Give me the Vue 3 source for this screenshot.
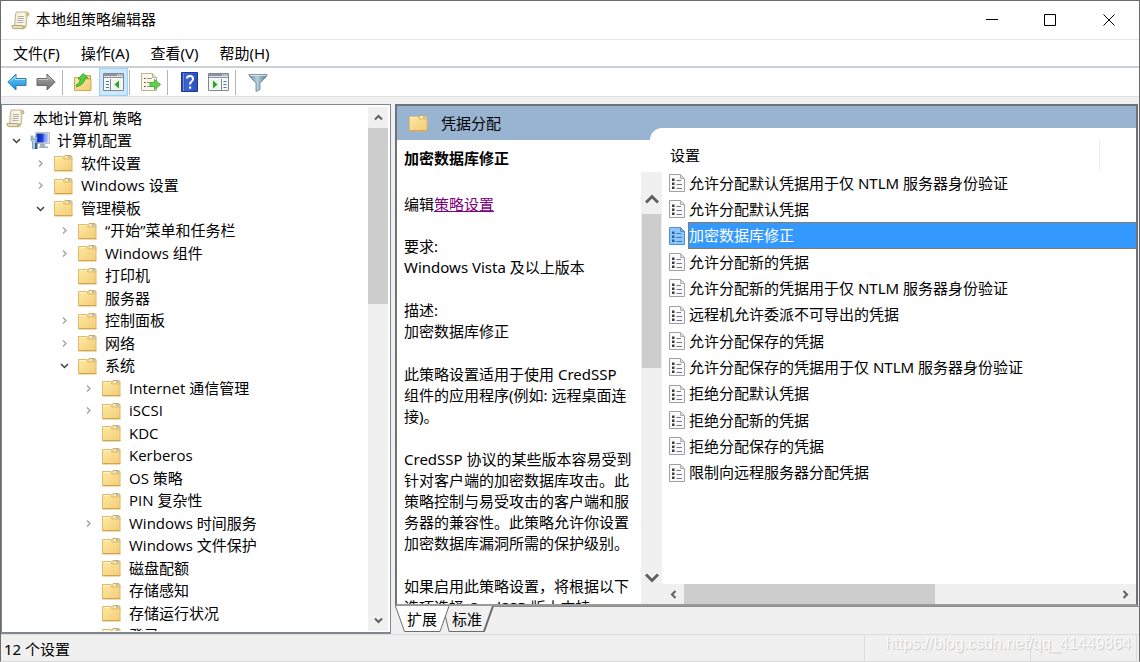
<script setup>
const menus = ['文件(F)', '操作(A)', '查看(V)', '帮助(H)']

const tree = [
  { level: 0, text: '本地计算机 策略', icon: 'scroll' },
  { level: 1, text: '计算机配置', icon: 'computer', state: 'open' },
  { level: 2, text: '软件设置', state: 'closed' },
  { level: 2, text: 'Windows 设置', state: 'closed' },
  { level: 2, text: '管理模板', state: 'open' },
  { level: 3, text: '“开始”菜单和任务栏', state: 'closed' },
  { level: 3, text: 'Windows 组件', state: 'closed' },
  { level: 3, text: '打印机' },
  { level: 3, text: '服务器' },
  { level: 3, text: '控制面板', state: 'closed' },
  { level: 3, text: '网络', state: 'closed' },
  { level: 3, text: '系统', state: 'open' },
  { level: 4, text: 'Internet 通信管理', state: 'closed' },
  { level: 4, text: 'iSCSI', state: 'closed' },
  { level: 4, text: 'KDC' },
  { level: 4, text: 'Kerberos' },
  { level: 4, text: 'OS 策略' },
  { level: 4, text: 'PIN 复杂性' },
  { level: 4, text: 'Windows 时间服务', state: 'closed' },
  { level: 4, text: 'Windows 文件保护' },
  { level: 4, text: '磁盘配额' },
  { level: 4, text: '存储感知' },
  { level: 4, text: '存储运行状况' },
  { level: 4, text: '登录' },
]

const paragraphs = [
  ['要求:', 'Windows Vista 及以上版本'],
  ['描述:', '加密数据库修正'],
  ['此策略设置适用于使用 CredSSP', '组件的应用程序(例如: 远程桌面连', '接)。'],
  [
    'CredSSP 协议的某些版本容易受到',
    '针对客户端的加密数据库攻击。此',
    '策略控制与易受攻击的客户端和服',
    '务器的兼容性。此策略允许你设置',
    '加密数据库漏洞所需的保护级别。',
  ],
  ['如果启用此策略设置，将根据以下', '选项选择 CredSSP 版本支持:'],
]

const settings = [
  '允许分配默认凭据用于仅 NTLM 服务器身份验证',
  '允许分配默认凭据',
  '加密数据库修正',
  '允许分配新的凭据',
  '允许分配新的凭据用于仅 NTLM 服务器身份验证',
  '远程机允许委派不可导出的凭据',
  '允许分配保存的凭据',
  '允许分配保存的凭据用于仅 NTLM 服务器身份验证',
  '拒绝分配默认凭据',
  '拒绝分配新的凭据',
  '拒绝分配保存的凭据',
  '限制向远程服务器分配凭据',
]
const selected = 2
</script>

<template>
  <div class="window">
    <svg class="defs" width="0" height="0" aria-hidden="true">
      <defs>
        <linearGradient id="gFolder" x1="0" y1="0" x2="1" y2="1">
          <stop offset="0" stop-color="#ffe9a3" />
          <stop offset="1" stop-color="#f2cc76" />
        </linearGradient>
        <linearGradient id="gPaper" x1="0" y1="0" x2="1" y2="0">
          <stop offset="0" stop-color="#f1e8cb" />
          <stop offset="0.6" stop-color="#fdf9ec" />
          <stop offset="1" stop-color="#e6d9b0" />
        </linearGradient>
        <linearGradient id="gBlue" x1="0" y1="0" x2="0" y2="1">
          <stop offset="0" stop-color="#6fc8f5" />
          <stop offset="1" stop-color="#1b8fdc" />
        </linearGradient>
        <linearGradient id="gGrey" x1="0" y1="0" x2="0" y2="1">
          <stop offset="0" stop-color="#a8a8a8" />
          <stop offset="1" stop-color="#6e6e6e" />
        </linearGradient>
        <linearGradient id="gHelp" x1="0" y1="0" x2="1" y2="0">
          <stop offset="0" stop-color="#2444a8" />
          <stop offset="0.3" stop-color="#3f66d0" />
          <stop offset="1" stop-color="#2b50bd" />
        </linearGradient>
        <linearGradient id="gFunnel" x1="0" y1="0" x2="1" y2="0">
          <stop offset="0" stop-color="#5f8095" />
          <stop offset="0.45" stop-color="#b9d0dc" />
          <stop offset="1" stop-color="#56778c" />
        </linearGradient>
        <linearGradient id="gScreen" x1="0" y1="0" x2="1" y2="0">
          <stop offset="0" stop-color="#0a1fb4" />
          <stop offset="0.55" stop-color="#1f45d8" />
          <stop offset="0.65" stop-color="#6d8cf0" />
          <stop offset="1" stop-color="#b3c8f8" />
        </linearGradient>
      </defs>
      <symbol id="folder" viewBox="0 0 19 18">
        <path d="M9.500 3.500L11 1.500h5.500l1.500 1v3h-8.500z" fill="#f6dc94" stroke="#d2ab58" />
        <path d="M12 2.500h4.500v1H12z" fill="#fff" />
        <path d="M14 2.500h2.500v1H14z" fill="#3f95dc" />
        <path d="M.5 2.500h8.500l1 2.500h8v12H.5z" fill="url(#gFolder)" stroke="#dfba68" />
        <path d="M1 16.500h17.500" stroke="#cfa654" />
        <path d="M1.500 3.500h7" stroke="#fff3c8" />
      </symbol>
      <symbol id="scroll" viewBox="0 0 19 19">
        <path d="M5.500 1h10.500q2 .3 2 2.500 0 1.700-2 1.700L15 15.500H3.500L4.500 3z" fill="url(#gPaper)" stroke="#b5aa8c" stroke-width=".9" />
        <path d="M15 1.500q-1.200 1.700.5 3.500 2.300.2 2.300-1.800T16 1.300z" fill="#cdbb83" />
        <path d="M1 14.500h10.500q0 2.500 1.500 3.200H3Q.6 17.500 1 14.500z" fill="#eadfb9" stroke="#a89c78" stroke-width=".9" />
        <path d="M11.500 14.500h3.800q0 3-2.300 3.200-1.700-.6-1.500-3.200z" fill="#c9b67e" />
        <path d="M7 5.500h6M7 7.500h6M6.500 9.500h6M6.500 11.500h6" stroke="#aeb0b0" />
      </symbol>
      <symbol id="computer" viewBox="0 0 21 19">
        <path d="M5.500 1.500h14v11h-14z" fill="#dfe1e3" stroke="#bfc3c8" />
        <path d="M6.500 2.500h11.500v9H6.500z" fill="url(#gScreen)" />
        <path d="M10 13h5v2.500h3V17H9v-1.500h1z" fill="#a9aeb4" />
        <path d="M1 6l1-1.500L3 6v2.500h2V6l1-1.500L7 6v3L5.500 11v6.500H2.500V11L1 9z" fill="#a9cbe4" stroke="#6e94b2" stroke-width=".8" />
        <path d="M5 12h2.500v6H5z" fill="#2e628e" />
      </symbol>
      <symbol id="policy" viewBox="0 0 16 18">
        <path d="M.5.500h11l4 4v13H.5z" fill="#fafafa" stroke="#a0a0a0" />
        <path d="M11.500.500v4h4z" fill="#dedede" stroke="#b0b0b0" />
        <path d="M3 4.500h2.500V7H3zM3 8.500h2.500V11H3zM3 12.500h2.500V15H3z" fill="#3c3c3c" />
        <path d="M7.500 6.500H12M7.500 10.500H13M7.500 14.500H13" stroke="#747096" />
      </symbol>
      <symbol id="policy-selected" viewBox="0 0 16 18">
        <path d="M.5.500h11l4 4v13H.5z" fill="#8fc5fb" stroke="#4a90d5" />
        <path d="M11.500.500v4h4z" fill="#6eb0f2" stroke="#4a90d5" />
        <path d="M3 4.500h2.500V7H3zM3 8.500h2.500V11H3zM3 12.500h2.500V15H3z" fill="#235f9f" />
        <path d="M7.500 6.500H12M7.500 10.500H13M7.500 14.500H13" stroke="#3679c8" />
      </symbol>
    </svg>

    <header class="titlebar">
      <svg class="app-icon" width="19" height="19"><use href="#scroll" /></svg>
      <h1>本地组策略编辑器</h1>
      <button class="caption" aria-label="最小化"><svg width="12" height="12"><path d="M0 5.500h12" /></svg></button>
      <button class="caption" aria-label="最大化"><svg width="12" height="12"><path d="M.5.500h11v11H.5z" /></svg></button>
      <button class="caption" aria-label="关闭"><svg width="12" height="12"><path d="M.5.500l11 11M11.500.500l-11 11" /></svg></button>
    </header>

    <nav class="menubar">
      <button v-for="m in menus" :key="m">{{ m }}</button>
    </nav>

    <div class="toolbar" role="toolbar">
      <button aria-label="后退">
        <svg width="20" height="18"><path d="M.8 9L9 1v4.500h10v7H9V17z" fill="url(#gBlue)" stroke="#2f7fb4" /><path d="M3 8.500l5-5v3h10" fill="none" stroke="#a8e0fb" /></svg>
      </button>
      <button aria-label="前进">
        <svg width="20" height="18"><path d="M19.200 9L11 1v4.500H1v7h10V17z" fill="url(#gGrey)" stroke="#6b6b6b" /><path d="M2 6.500h10v-3l4 4" fill="none" stroke="#c4c4c4" /></svg>
      </button>
      <span class="sep"></span>
      <button class="up" aria-label="向上一级">
        <svg width="20" height="20">
          <path d="M11 3.500h6.500V7H11z" fill="#f3d88c" stroke="#caa351" />
          <path d="M1.500 5.500h9L12 7h6v11.500H1.500z" fill="url(#gFolder)" stroke="#cda754" />
          <path d="M3 13q4-1 4.500-6H5l5-5.500L15 6h-3q0 6-8.500 9z" fill="#4fd03c" stroke="#2e9c25" stroke-width=".8" />
        </svg>
      </button>
      <button class="active" aria-label="显示/隐藏控制台树">
        <svg width="21" height="18">
          <path d="M.5.500h20v17H.5z" fill="#f7f8f9" stroke="#81878d" />
          <path d="M1 1h19v4H1z" fill="#8a949e" /><path d="M1 3.500h19" stroke="#dfe4e8" />
          <path d="M14 2h1.500M16 2h1.500M18 2h1.500" stroke="#fff" />
          <path d="M7.500 6v11" stroke="#81878d" /><path d="M3 8.500h3M3 11.500h3M3 14.500h3" stroke="#3679bd" />
          <path d="M10 7h8v9h-8z" fill="#e9f5e5" /><path d="M16 7.500v8L11.500 11.500z" fill="#2fa12e" />
        </svg>
      </button>
      <span class="sep after-active"></span>
      <button class="export" aria-label="导出列表">
        <svg width="21" height="20">
          <path d="M1.500 1.500h11l4 4v13h-15z" fill="#fdf8e6" stroke="#b9b39c" />
          <path d="M12.500 1.500v4h4" fill="#e8e0c4" stroke="#b9b39c" />
          <path d="M4 6.500h1.500M4 10.500h1.500M4 14.500h1.500" stroke="#444" />
          <path d="M7 6.500h5M7 10.500h4M7 14.500h4" stroke="#8f93ae" />
          <path d="M10 10.500h4.500v-3l6 5-6 5v-3H10z" fill="#5fd34a" stroke="#36a52c" stroke-width=".8" />
        </svg>
      </button>
      <span class="sep"></span>
      <button class="help" aria-label="帮助">
        <svg width="17" height="20">
          <path d="M.5.500h16v19H.5z" fill="url(#gHelp)" stroke="#1d3794" />
          <path d="M2.500 1v18" stroke="#7390df" />
          <path d="M6 6.500Q6 4 9 4t3 3q0 1.500-1.500 2.500T9 12.500" fill="none" stroke="#fff" stroke-width="2" />
          <path d="M8 14.500h2.200v2.200H8z" fill="#fff" />
        </svg>
      </button>
      <button aria-label="显示/隐藏操作窗格">
        <svg width="21" height="18">
          <path d="M.5.500h20v17H.5z" fill="#f7f8f9" stroke="#81878d" />
          <path d="M1 1h19v4H1z" fill="#8a949e" /><path d="M1 3.500h19" stroke="#dfe4e8" />
          <path d="M14 2h1.500M16 2h1.500M18 2h1.500" stroke="#fff" />
          <path d="M13.500 6v11" stroke="#81878d" /><path d="M15.500 8.500h3M15.500 11.500h3M15.500 14.500h3" stroke="#3679bd" />
          <path d="M3 7h8v9H3z" fill="#e9f5e5" /><path d="M5 7.500v8L9.500 11.500z" fill="#2fa12e" />
        </svg>
      </button>
      <span class="sep"></span>
      <button aria-label="筛选">
        <svg width="20" height="19">
          <path d="M.8 1.500h18.400L18 4l-6 6v6.500L8 18.500V10L2 4z" fill="url(#gFunnel)" stroke="#6a8798" stroke-width=".8" />
          <path d="M2 2.500h16" stroke="#d7e4ec" />
        </svg>
      </button>
    </div>

    <main class="workspace">
      <section class="tree-pane">
        <ul class="tree">
          <li v-for="n in tree" :key="n.text" :class="'level-' + n.level">
            <button v-if="n.state" class="toggle" :class="n.state" :aria-label="n.state === 'open' ? '折叠' : '展开'">
              <svg v-if="n.state === 'open'" width="9" height="9"><path d="M1 3l3.500 3.500L8 3" /></svg>
              <svg v-else width="9" height="9"><path d="M3 1.500l3 3-3 3" /></svg>
            </button>
            <span v-else-if="n.level" class="toggle"></span>
            <svg v-if="n.icon === 'computer'" class="node-icon" width="21" height="19"><use href="#computer" /></svg>
            <svg v-else-if="n.icon === 'scroll'" class="node-icon" width="19" height="19"><use href="#scroll" /></svg>
            <svg v-else class="node-icon" width="19" height="18"><use href="#folder" /></svg>
            <span class="label">{{ n.text }}</span>
          </li>
        </ul>
        <div class="scroll tree-scroll">
          <button aria-label="向上滚动"><svg width="9" height="7"><path d="M1 5.500L4.500 2 8 5.500" /></svg></button>
          <div class="thumb"></div>
          <div class="track"></div>
          <button aria-label="向下滚动"><svg width="9" height="7"><path d="M1 1.500L4.500 5 8 1.500" /></svg></button>
        </div>
      </section>

      <section class="right">
        <div class="result-pane">
          <div class="result-head">
            <svg width="19" height="18"><use href="#folder" /></svg>
            <span>凭据分配</span>
          </div>
          <div class="result-body">
            <article class="detail">
              <h2>加密数据库修正</h2>
              <p class="edit">编辑<a href="#">策略设置</a></p>
              <p v-for="(p, i) in paragraphs" :key="i">
                <span v-for="line in p" :key="line">{{ line }}</span>
              </p>
            </article>
            <div class="scroll detail-scroll">
              <button aria-label="向上滚动"><svg width="14" height="12"><path d="M1 9.500L7 3.500 13 9.500" /></svg></button>
              <div class="thumb"></div>
              <div class="track"></div>
              <button aria-label="向下滚动"><svg width="14" height="12"><path d="M1 2.500L7 8.500 13 2.500" /></svg></button>
            </div>
            <div class="list">
              <div class="column-head"><span>设置</span></div>
              <ul>
                <li v-for="(s, i) in settings" :key="s" :class="{ selected: i === selected }">
                  <svg width="16" height="18"><use :href="i === selected ? '#policy-selected' : '#policy'" /></svg>
                  <span>{{ s }}</span>
                </li>
              </ul>
              <div class="hscroll">
                <button aria-label="向左滚动"><svg width="7" height="9"><path d="M5.500 1L2 4.500 5.500 8" /></svg></button>
                <div class="thumb"></div>
                <div class="track"></div>
                <button aria-label="向右滚动"><svg width="7" height="9"><path d="M1.500 1L5 4.500 1.500 8" /></svg></button>
              </div>
            </div>
          </div>
        </div>
        <div class="tabs" role="tablist">
          <svg class="tab-shape" width="100" height="27" aria-hidden="true">
            <path d="M48 0L54 25.500H89L98 0" fill="#f0f0f0" stroke="#6d6d6d" />
            <path d="M98 0L89 25.500" stroke="#6d6d6d" stroke-width="2" />
            <path d="M.5 0L9.500 25.500H45L54 0" fill="#fff" stroke="#6d6d6d" />
          </svg>
          <button role="tab" aria-selected="true">扩展</button>
          <button role="tab" aria-selected="false">标准</button>
        </div>
      </section>
    </main>

    <footer class="statusbar">
      <span class="status-text">12 个设置</span>
      <span class="cell wide"></span>
      <span class="cell"></span>
      <span class="watermark">https://blog.csdn.net/qq_41449864</span>
    </footer>
  </div>
</template>

<style>
body {
  margin: 0;
}
</style>

<style scoped>
.window {
  display: flex;
  flex-direction: column;
  height: 100vh;
  box-sizing: border-box;
  border: 1px solid #6b6b6b;
  border-bottom-color: #d9d9d9;
  background: #f0f0f0;
  color: #000;
  font-family: "Noto Sans", "Noto Sans CJK SC", sans-serif;
  font-size: 15px;
  line-height: 21px;
  overflow: hidden;
}
.defs {
  position: absolute;
}
button {
  display: flex;
  align-items: center;
  justify-content: center;
  padding: 0;
  border: 0;
  background: none;
  color: inherit;
  font: inherit;
}
svg {
  display: block;
  flex: none;
}
ul,
h1,
h2,
p {
  margin: 0;
  padding: 0;
  list-style: none;
}
.titlebar {
  display: flex;
  align-items: center;
  flex: none;
  height: 38px;
  background: #fff;
  border-bottom: 1px solid #e5e5e5;
}
.app-icon {
  margin: 0 6px 0 10px;
}
h1 {
  flex: 1;
  padding-bottom: 2px;
  font-size: 15px;
  font-weight: 400;
}
.caption {
  width: 58px;
  height: 38px;
}
.caption:last-child {
  width: 60px;
}
.caption path {
  fill: none;
  stroke: #000;
}
.menubar {
  display: flex;
  gap: 21px;
  flex: none;
  height: 26px;
  padding-left: 12px;
  background: #fff;
  border-bottom: 2px solid #ccd1d6;
}
.toolbar {
  display: flex;
  align-items: center;
  flex: none;
  height: 28px;
  padding-left: 1px;
  background: #fff;
  border-bottom: 1px solid #e0e0e0;
}
.toolbar button {
  width: 29px;
  height: 28px;
}
.toolbar .up {
  padding-right: 3px;
}
.toolbar .active {
  box-sizing: border-box;
  border: 1px solid #99d1ff;
  background: #cce8ff;
}
.sep {
  width: 1px;
  height: 25px;
  margin: 0 7px 0 2px;
  background: #b5b5b5;
}
.after-active {
  margin: 0 6px 0 1px;
}
.tree-pane {
  display: flex;
  box-sizing: border-box;
  width: 390px;
  flex: none;
  padding: 2px 2px 1px 1px;
  background: #fff;
  border: 1px solid #828790;
  border-bottom-width: 2px;
  overflow: hidden;
}
.workspace {
  display: flex;
  flex: 1;
  min-height: 0;
  gap: 4px;
  padding-top: 7px;
}
.tree {
  flex: 1;
  overflow: hidden;
  font-family: "Open Sans", "Noto Sans CJK SC", sans-serif;
}
.tree li {
  display: flex;
  align-items: center;
  height: 22px;
  white-space: nowrap;
}
.tree li:nth-child(even) {
  height: 23px;
}
.tree .level-0,
.tree .level-1 {
  padding-left: 3px;
}
.tree .level-2 {
  padding-left: 27px;
}
.tree .level-3 {
  padding-left: 51px;
}
.tree .level-4 {
  padding-left: 75px;
}
.toggle {
  width: 20px;
  height: 20px;
  margin-right: 4px;
  flex: none;
}
.toggle path {
  fill: none;
  stroke: #a6a6a6;
  stroke-width: 1.5;
}
.toggle.open path {
  stroke: #404040;
}
.node-icon {
  margin-right: 8px;
}
.level-1 .node-icon {
  margin-right: 6px;
}
.scroll {
  display: flex;
  flex-direction: column;
  flex: none;
  background: #f0f0f0;
}
.track {
  flex: 1;
}
.thumb {
  flex: none;
  background: #cdcdcd;
}
.scroll path,
.hscroll path {
  fill: none;
  stroke: #606060;
  stroke-width: 2;
}
.tree-scroll {
  width: 20px;
}
.tree-scroll button {
  height: 21px;
}
.tree-scroll .thumb {
  height: 176px;
}
.right {
  display: flex;
  flex-direction: column;
  flex: 1;
  min-width: 0;
}
.result-pane {
  display: flex;
  flex-direction: column;
  flex: 1;
  min-height: 0;
  margin-right: 1px;
  border: 2px solid #6f7276;
  border-bottom-color: #9a9a9a;
  background: #fff;
}
.result-head {
  display: flex;
  align-items: center;
  position: relative;
  flex: none;
  height: 34px;
  gap: 13px;
  padding-left: 12px;
  background: #99b4d1;
}
.result-head::after {
  content: "";
  position: absolute;
  left: 253px;
  right: 0;
  bottom: 0;
  height: 12px;
  border-top-left-radius: 12px;
  background: #fff;
}
.result-body {
  display: flex;
  flex: 1;
  min-height: 0;
}
.detail {
  width: 237px;
  flex: none;
  padding: 8px 0 0 7px;
  overflow: hidden;
  white-space: nowrap;
}
.detail h2 {
  margin-bottom: 25px;
  font-size: 15px;
  font-weight: 700;
}
.detail p {
  margin-bottom: 22px;
}
.detail .edit {
  margin-bottom: 21px;
}
.detail span {
  display: block;
}
.detail a {
  color: #800080;
}
.detail-scroll {
  width: 21px;
  margin-top: 32px;
}
.detail-scroll button {
  height: 42px;
}
.detail-scroll button:first-child {
  padding-top: 12px;
  box-sizing: border-box;
}
.detail-scroll button:last-child {
  padding-bottom: 10px;
}
.detail-scroll path {
  stroke-width: 3;
}
.detail-scroll .thumb {
  height: 154px;
  margin: 0 1px;
}
.list {
  display: flex;
  flex-direction: column;
  flex: 1;
  min-width: 0;
}
.column-head {
  display: flex;
  align-items: center;
  flex: none;
  height: 30px;
  margin-right: 36px;
  padding-left: 8px;
  border-right: 1px solid #ececec;
}
.list ul {
  flex: 1;
  min-height: 0;
  overflow: hidden;
}
.list li {
  display: flex;
  align-items: center;
  height: 26px;
  gap: 3px;
  padding-left: 7px;
  white-space: nowrap;
}
.list li:nth-child(3n) {
  height: 27px;
}
.list li span {
  flex: 1;
  padding: 2px 0;
  border: 1px solid transparent;
}
.list .selected span {
  background: #3399ff;
  border-color: #8a7a66;
  border-right: 0;
  color: #fff;
}
.hscroll {
  display: flex;
  flex: none;
  height: 20px;
  background: #f0f0f0;
}
.hscroll button {
  width: 22px;
}
.hscroll .thumb {
  width: 53%;
}
.tabs {
  display: flex;
  position: relative;
  flex: none;
  height: 27px;
  gap: 15px;
  padding-left: 12px;
  border-top: 1px solid #8c8c8c;
}
.tab-shape {
  position: absolute;
  left: 0;
  top: -1px;
}
.tabs button {
  position: relative;
  height: 25px;
}
.statusbar {
  display: flex;
  position: relative;
  align-items: center;
  flex: none;
  height: 26px;
  padding-left: 3px;
  border-top: 1px solid #dcdcdc;
}
.status-text {
  flex: 1;
  padding-top: 3px;
}
.cell {
  box-sizing: border-box;
  width: 107px;
  height: 26px;
  margin-right: 2px;
  border-left: 1px solid #dcdcdc;
  border-right: 1px solid #dcdcdc;
}
.wide {
  width: 166px;
  margin-right: 0;
  border-right: 0;
}
.watermark {
  position: absolute;
  right: 8px;
  top: -2px;
  font-family: "Liberation Sans", Arial, sans-serif;
  font-size: 16px;
  color: #fafafa;
  text-shadow: 1px 1px 1px #c6c6c6;
}
</style>
